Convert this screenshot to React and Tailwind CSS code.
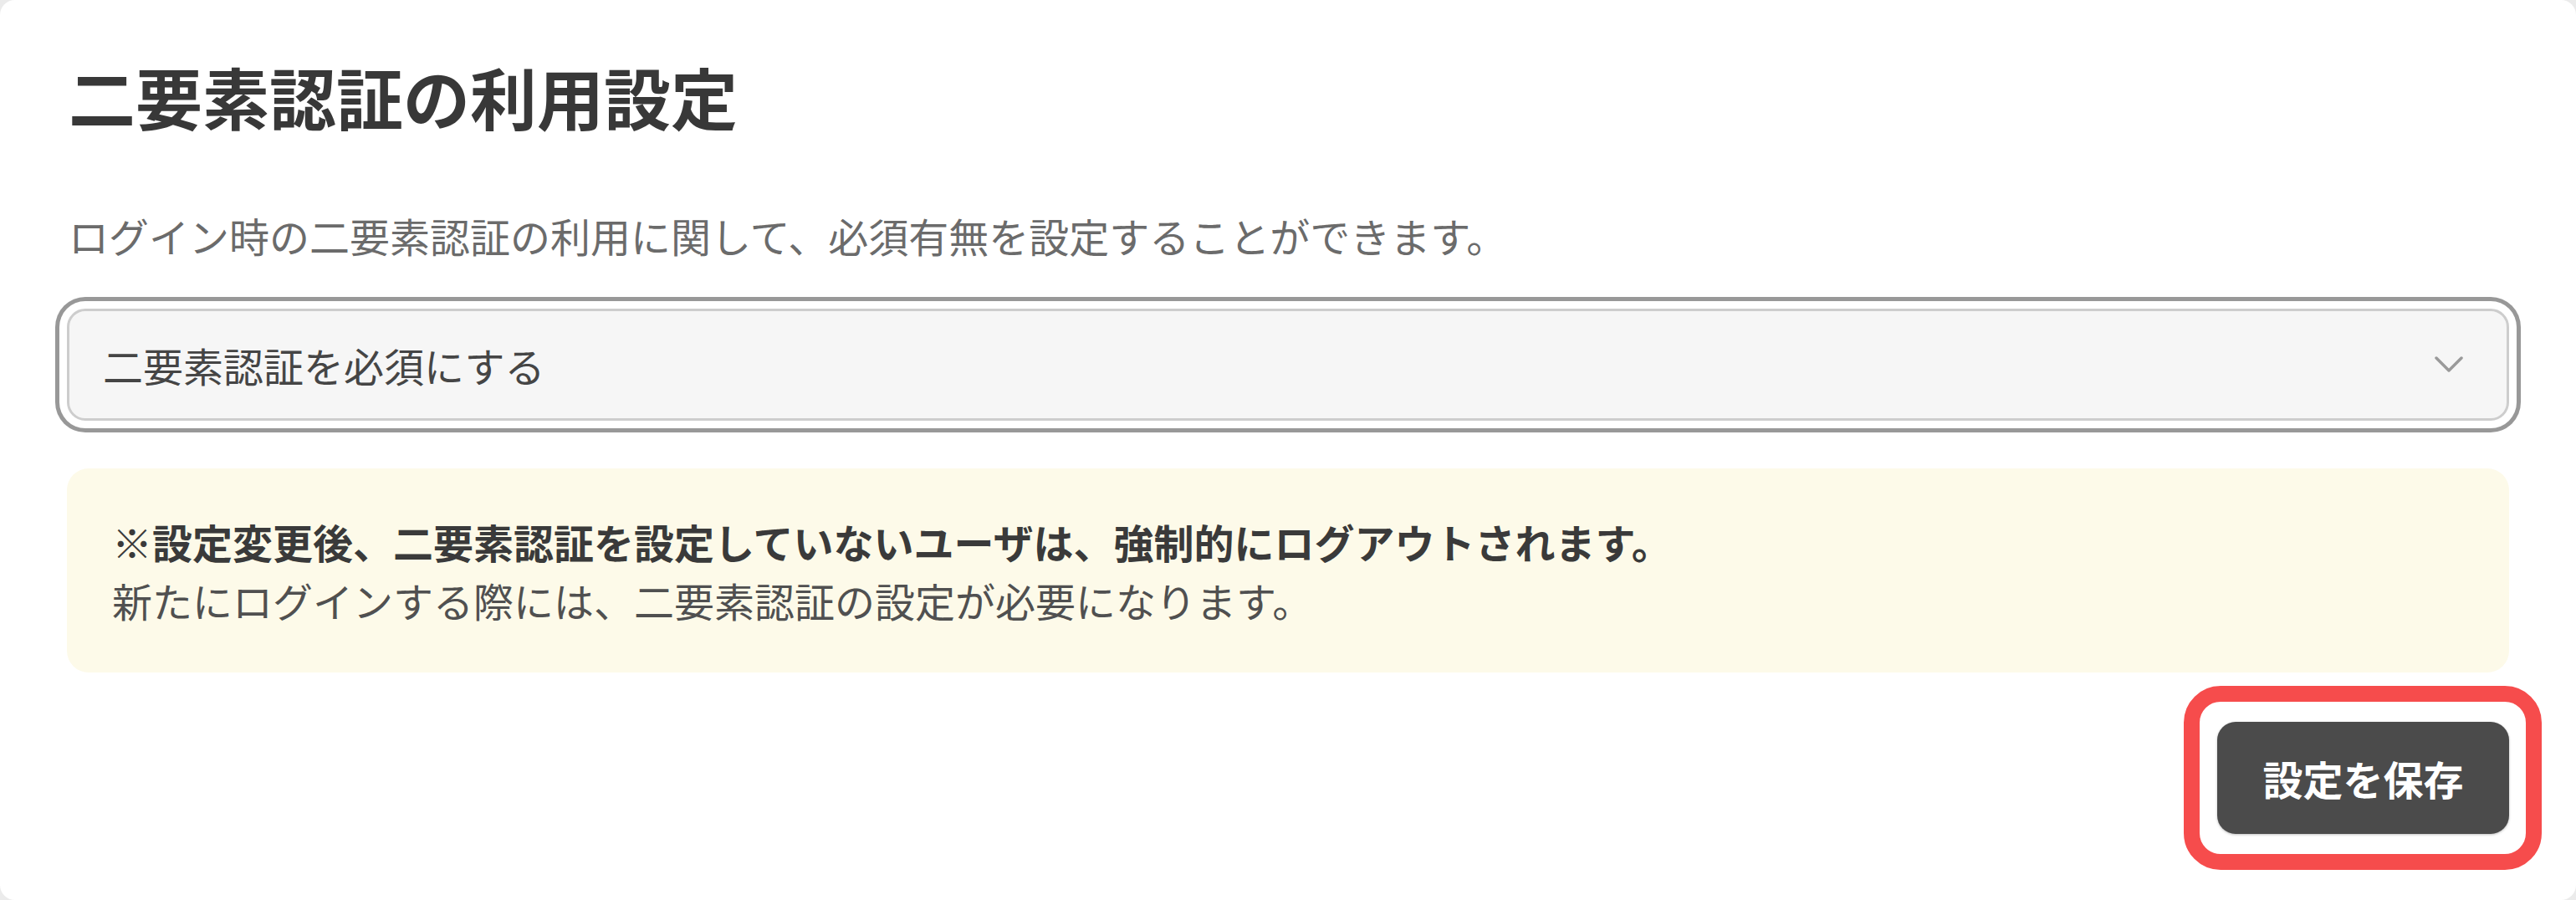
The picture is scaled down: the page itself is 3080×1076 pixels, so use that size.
export default function App() {
  return (
    <div className="w-[3080px] h-[1076px] bg-[#ebebeb] overflow-hidden" style={{ fontFamily: '"Noto Sans CJK JP", "Noto Sans", sans-serif' }}>
      <div className="w-full h-full bg-white rounded-[18px] px-[80px] pt-[66px] flex flex-col">
        <h1 className="text-[80px] leading-[96px] font-bold text-[#383838] pl-[2px]">二要素認証の利用設定</h1>
        <p className="mt-[83px] text-[48px] leading-[72px] text-[#6b6b6b] pl-[2px]">
          ログイン時の二要素認証の利用に関して、必須有無を設定することができます。
        </p>
        <div className="mt-[52px] h-[134px] rounded-[22px] border-[3px] border-[#cdcdcd] bg-[#f6f6f6] flex items-center justify-between pl-[40px] pr-[52px] shadow-[0_0_0_9px_#ffffff,0_0_0_14px_#989898]">
          <span className="text-[48px] leading-[72px] text-[#454545]">二要素認証を必須にする</span>
          <svg width="34" height="20" viewBox="0 0 34 20" fill="none">
            <path d="M2 2 L17 17 L32 2" stroke="#9a9a9a" strokeWidth="3.5" strokeLinecap="round" strokeLinejoin="round" />
          </svg>
        </div>
        <div className="mt-[57px] rounded-[26px] bg-[#fdfae9] px-[54px] py-[52px]">
          <p className="text-[48px] leading-[70px] font-bold text-[#3a3a3a]">
            ※設定変更後、二要素認証を設定していないユーザは、強制的にログアウトされます。
          </p>
          <p className="text-[48px] leading-[70px] text-[#505050]">
            新たにログインする際には、二要素認証の設定が必要になります。
          </p>
        </div>
        <div className="mt-[59px] flex justify-end">
          <div className="relative">
            <button className="h-[134px] w-[349px] rounded-[22px] bg-[#4b4b4b] text-white text-[48px] font-bold leading-none flex items-center justify-center shadow-[0_1px_3px_rgba(0,0,0,0.25)]">
              設定を保存
            </button>
            <div className="absolute left-[-40px] top-[-43px] right-[-39px] bottom-[-43px] rounded-[44px] border-[19px] border-[#f64c4c] pointer-events-none" />
          </div>
        </div>
      </div>
    </div>
  );
}
